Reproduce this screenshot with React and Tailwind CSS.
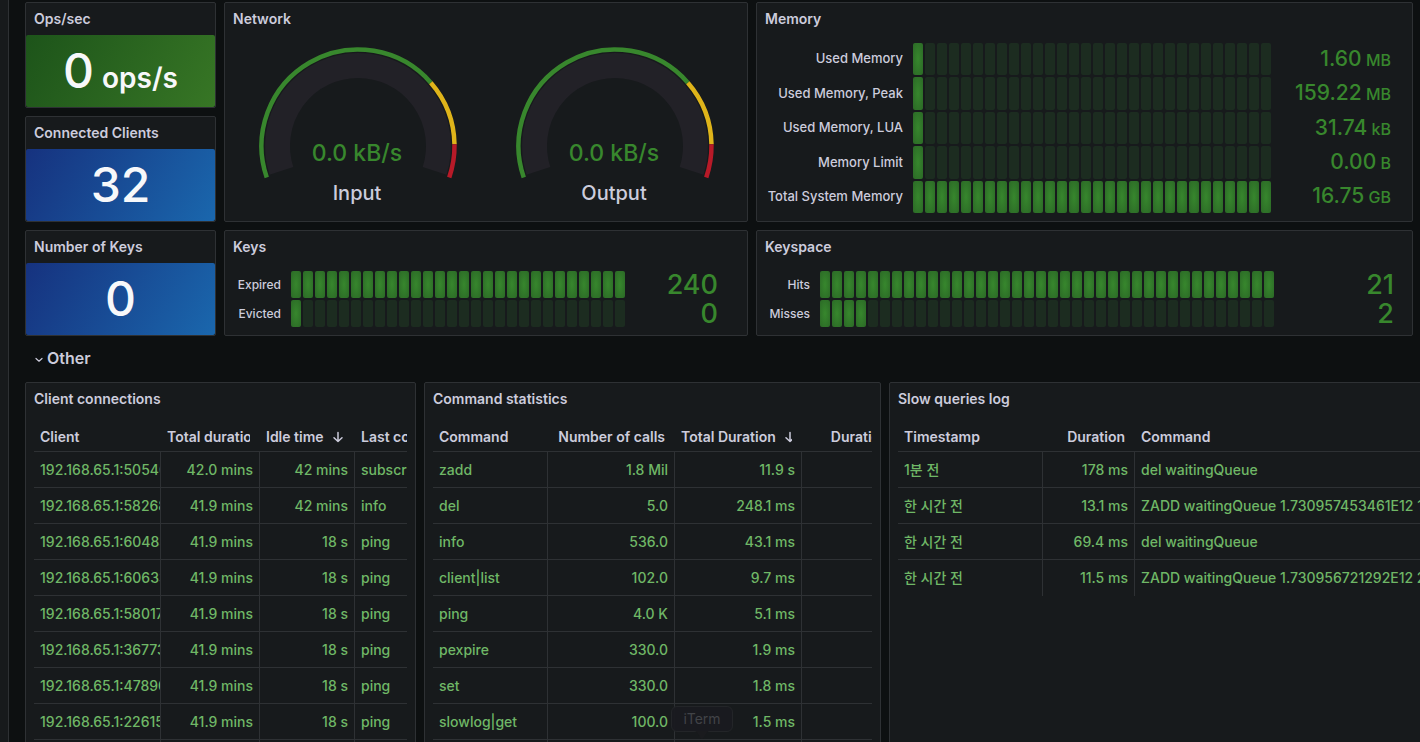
import React, { useState } from "react";

function Panel({ title, className = "", children }) {
  return (
    <section
      className={`flex min-w-0 flex-col overflow-hidden rounded-xs border border-[#2e3134] bg-[#171a1c] ${className}`}
    >
      <h2 className="flex h-8 shrink-0 items-center px-2 text-sm font-semibold">{title}</h2>
      {children}
    </section>
  );
}

function Stat({ title, value, unit, tone }) {
  return (
    <Panel title={title}>
      <div
        className={`flex h-[72px] items-baseline justify-center rounded-xs text-[48px] leading-[72px] font-medium text-[#f7f8fa] ${tone}`}
      >
        <span>{value}</span>
        {unit && <span className="ml-2 text-[28px] font-semibold">{unit}</span>}
      </div>
    </Panel>
  );
}

const BLUE = "bg-linear-120 from-[#16327f] to-[#1a67ad]";
const GREEN = "bg-linear-120 from-[#1d541a] to-[#377625]";

const CX = 125;
const CY = 103;

function point(radius, degrees) {
  const a = (degrees * Math.PI) / 180;
  return `${(CX + radius * Math.cos(a)).toFixed(2)} ${(CY - radius * Math.sin(a)).toFixed(2)}`;
}

function arc(radius, from, to) {
  const large = from - to > 180 ? 1 : 0;
  return `M${point(radius, from)}A${radius} ${radius} 0 ${large} 1 ${point(radius, to)}`;
}

function Gauge({ label, value }) {
  return (
    <svg
      viewBox="0 0 249 170"
      className="h-[170px] min-w-0 flex-1"
      role="img"
      aria-label={`${label} ${value}`}
      fill="none"
    >
      <path d={arc(80.5, 198, -18)} stroke="#222127" strokeWidth="25" />
      <path d={arc(96.5, 199, 41)} stroke="#38872d" strokeWidth="4.5" />
      <path d={arc(96.5, 41, 1)} stroke="#dfb41a" strokeWidth="4.5" />
      <path d={arc(96.5, 1, -19)} stroke="#b81a28" strokeWidth="4.5" />
      <text x="124" y="118" textAnchor="middle" fill="#38872d" className="text-[23px] font-medium">
        {value}
      </text>
      <text x="124" y="157" textAnchor="middle" fill="#ccccdc" className="text-xl font-medium">
        {label}
      </text>
    </svg>
  );
}

function Cells({ count, lit }) {
  return (
    <div className="flex min-w-0 flex-1 gap-0.5">
      {Array.from({ length: count }, (_, i) => (
        <span
          key={i}
          className={
            i < lit
              ? "flex-1 rounded-xs bg-radial from-[#37872d] to-[#2b6926]"
              : "flex-1 rounded-xs bg-[#1c2c20]"
          }
        />
      ))}
    </div>
  );
}

function BarGauge({ rows, count, labelClass, valueClass, unitClass = "" }) {
  return (
    <div className="flex flex-1 flex-col gap-0.5 p-2">
      {rows.map((r) => (
        <div key={r.label} className="flex flex-1">
          <span
            className={`mr-2.5 flex shrink-0 items-center justify-end font-medium whitespace-nowrap ${labelClass}`}
          >
            {r.label}
          </span>
          <Cells count={count} lit={r.lit} />
          <span
            className={`flex shrink-0 items-center justify-end leading-6 font-medium text-[#38872d] ${valueClass}`}
          >
            <span>
              {r.value}
              {r.unit && <span className={unitClass}> {r.unit}</span>}
            </span>
          </span>
        </div>
      ))}
    </div>
  );
}

function SortArrow() {
  return (
    <svg
      viewBox="0 0 12 12"
      className="ml-2 h-3 w-3 shrink-0"
      fill="none"
      stroke="currentColor"
      strokeWidth="1.5"
      strokeLinecap="round"
      strokeLinejoin="round"
      aria-hidden="true"
    >
      <path d="M6 1.5v9M2 6.7l4 3.8 4-3.8" />
    </svg>
  );
}

function DataTable({ columns, rows, tableClass, lastRowOpen }) {
  return (
    <div className="mx-2 mt-2 overflow-hidden">
      <table className={`table-fixed border-separate border-spacing-0 text-sm ${tableClass}`}>
        <colgroup>
          {columns.map((c) => (
            <col key={c.name} className={c.width} />
          ))}
        </colgroup>
        <thead>
          <tr>
            {columns.map((c) => (
              <th
                key={c.name}
                scope="col"
                className="h-[29px] border-b border-[#2e3134] p-0 pr-2.5 pl-1.5 font-semibold"
              >
                <div className={`flex items-center overflow-hidden ${c.head}`}>
                  <span className="whitespace-nowrap">{c.name}</span>
                  {c.sorted && <SortArrow />}
                </div>
              </th>
            ))}
          </tr>
        </thead>
        <tbody className="font-medium text-[#6fb766]">
          {rows.map((row, r) => (
            <tr key={r}>
              {row.map((cell, i) => (
                <td
                  key={i}
                  className={`h-9 overflow-hidden border-[#2e3134] px-1.5 py-0 whitespace-nowrap ${
                    i < row.length - 1 ? "border-r" : ""
                  } ${lastRowOpen && r === rows.length - 1 ? "" : "border-b"} ${
                    columns[i].right ? "text-right" : ""
                  }`}
                >
                  {cell}
                </td>
              ))}
            </tr>
          ))}
        </tbody>
      </table>
    </div>
  );
}

const memory = [
  { label: "Used Memory", value: "1.60", unit: "MB", lit: 1 },
  { label: "Used Memory, Peak", value: "159.22", unit: "MB", lit: 1 },
  { label: "Used Memory, LUA", value: "31.74", unit: "kB", lit: 1 },
  { label: "Memory Limit", value: "0.00", unit: "B", lit: 1 },
  { label: "Total System Memory", value: "16.75", unit: "GB", lit: 30 },
];

const keys = [
  { label: "Expired", value: "240", lit: 28 },
  { label: "Evicted", value: "0", lit: 1 },
];

const keyspace = [
  { label: "Hits", value: "21", lit: 38 },
  { label: "Misses", value: "2", lit: 4 },
];

const clientColumns = [
  { name: "Client", width: "w-[127px]", head: "" },
  { name: "Total duration", width: "w-[99px]", head: "", right: true },
  { name: "Idle time", width: "w-[95px]", head: "", right: true, sorted: true },
  { name: "Last command", width: "w-[140px]", head: "" },
];

const clients = [
  ["192.168.65.1:50546", "42.0 mins", "42 mins", "subscribe"],
  ["192.168.65.1:58268", "41.9 mins", "42 mins", "info"],
  ["192.168.65.1:60483", "41.9 mins", "18 s", "ping"],
  ["192.168.65.1:60633", "41.9 mins", "18 s", "ping"],
  ["192.168.65.1:58017", "41.9 mins", "18 s", "ping"],
  ["192.168.65.1:36773", "41.9 mins", "18 s", "ping"],
  ["192.168.65.1:47890", "41.9 mins", "18 s", "ping"],
  ["192.168.65.1:22615", "41.9 mins", "18 s", "ping"],
  ["192.168.65.1:22616", "41.9 mins", "18 s", "ping"],
];

const commandColumns = [
  { name: "Command", width: "w-[115px]", head: "" },
  { name: "Number of calls", width: "w-[127px]", head: "justify-end", right: true },
  { name: "Total Duration", width: "w-[127px]", head: "", right: true, sorted: true },
  { name: "Duration per call", width: "w-[150px]", head: "justify-end", right: true },
];

const commands = [
  ["zadd", "1.8 Mil", "11.9 s", ""],
  ["del", "5.0", "248.1 ms", ""],
  ["info", "536.0", "43.1 ms", ""],
  ["client|list", "102.0", "9.7 ms", ""],
  ["ping", "4.0 K", "5.1 ms", ""],
  ["pexpire", "330.0", "1.9 ms", ""],
  ["set", "330.0", "1.8 ms", ""],
  ["slowlog|get", "100.0", "1.5 ms", ""],
  ["config|get", "100.0", "1.2 ms", ""],
];

const slowColumns = [
  { name: "Timestamp", width: "w-[145px]", head: "" },
  { name: "Duration", width: "w-[92px]", head: "justify-end", right: true },
  { name: "Command", width: "w-[320px]", head: "" },
];

const slow = [
  ["1분 전", "178 ms", "del waitingQueue"],
  ["한 시간 전", "13.1 ms", "ZADD waitingQueue 1.730957453461E12 1"],
  ["한 시간 전", "69.4 ms", "del waitingQueue"],
  ["한 시간 전", "11.5 ms", "ZADD waitingQueue 1.730956721292E12 2"],
];

export default function App() {
  const [open, setOpen] = useState(true);
  return (
    <div className="relative flex h-screen overflow-hidden bg-[#0d1011] font-['Inter','Noto_Sans_CJK_KR',sans-serif] text-[#ccccdc]">
      <aside className="w-[9px] shrink-0 border-r border-[#2e3134] bg-[#171a1c]" />
      <main className="flex min-w-0 flex-1 flex-col pt-0.5 pr-[7px] pl-4">
        <div className="grid shrink-0 grid-cols-[191fr_524fr_657fr] grid-rows-[106px_106px_106px] gap-2">
          <Stat title="Ops/sec" value="0" unit="ops/s" tone={GREEN} />
          <Panel title="Network" className="row-span-2">
            <div className="flex flex-1 gap-2 p-2">
              <Gauge label="Input" value="0.0 kB/s" />
              <Gauge label="Output" value="0.0 kB/s" />
            </div>
          </Panel>
          <Panel title="Memory" className="row-span-2">
            <BarGauge
              rows={memory}
              count={30}
              labelClass="w-[138px] text-[13px]"
              valueClass="w-[133px] pr-[13px] text-[21px]"
              unitClass="text-base"
            />
          </Panel>
          <Stat title="Connected Clients" value="32" tone={BLUE} />
          <Stat title="Number of Keys" value="0" tone={BLUE} />
          <Panel title="Keys">
            <BarGauge
              rows={keys}
              count={28}
              labelClass="w-12 text-xs"
              valueClass="w-[114px] pr-[21px] text-[27px]"
            />
          </Panel>
          <Panel title="Keyspace">
            <BarGauge
              rows={keyspace}
              count={38}
              labelClass="w-[45px] text-xs"
              valueClass="w-[130px] pr-2.5 text-[27px]"
            />
          </Panel>
        </div>

        <button
          type="button"
          aria-expanded={open}
          onClick={() => setOpen(!open)}
          className="mt-2 mb-2.5 flex h-7 shrink-0 items-center gap-1 self-start pl-2.5 text-base font-semibold"
        >
          <svg
            viewBox="0 0 8 8"
            className="mt-1 size-2"
            fill="none"
            stroke="currentColor"
            strokeWidth="1.2"
            strokeLinecap="round"
            strokeLinejoin="round"
            aria-hidden="true"
          >
            <path d="M1 2.5l3 2.7 3-2.7" />
          </svg>
          Other
        </button>

        {open && (
          <div className="-mr-7 -mb-2 grid min-h-0 flex-1 grid-cols-[391fr_457fr_552fr] gap-2">
            <Panel title="Client connections">
              <DataTable columns={clientColumns} rows={clients} tableClass="w-[461px]" />
            </Panel>
            <Panel title="Command statistics">
              <DataTable columns={commandColumns} rows={commands} tableClass="w-[519px]" />
            </Panel>
            <Panel title="Slow queries log">
              <DataTable columns={slowColumns} rows={slow} tableClass="w-[557px]" lastRowOpen />
            </Panel>
          </div>
        )}
      </main>

      <div
        role="tooltip"
        className="absolute bottom-2.5 left-[671px] flex h-[26px] w-[62px] items-center justify-center rounded-md border border-[#232528] bg-[#191a20]/95 text-sm text-[#414347]"
      >
        iTerm
        <svg
          viewBox="0 0 16 8"
          className="absolute top-full left-1/2 h-2 w-4 -translate-x-1/2"
          fill="#1a1b1e"
          aria-hidden="true"
        >
          <path d="M0 0h16c-4 0-6 8-8 8S4 0 0 0z" />
        </svg>
      </div>
    </div>
  );
}
